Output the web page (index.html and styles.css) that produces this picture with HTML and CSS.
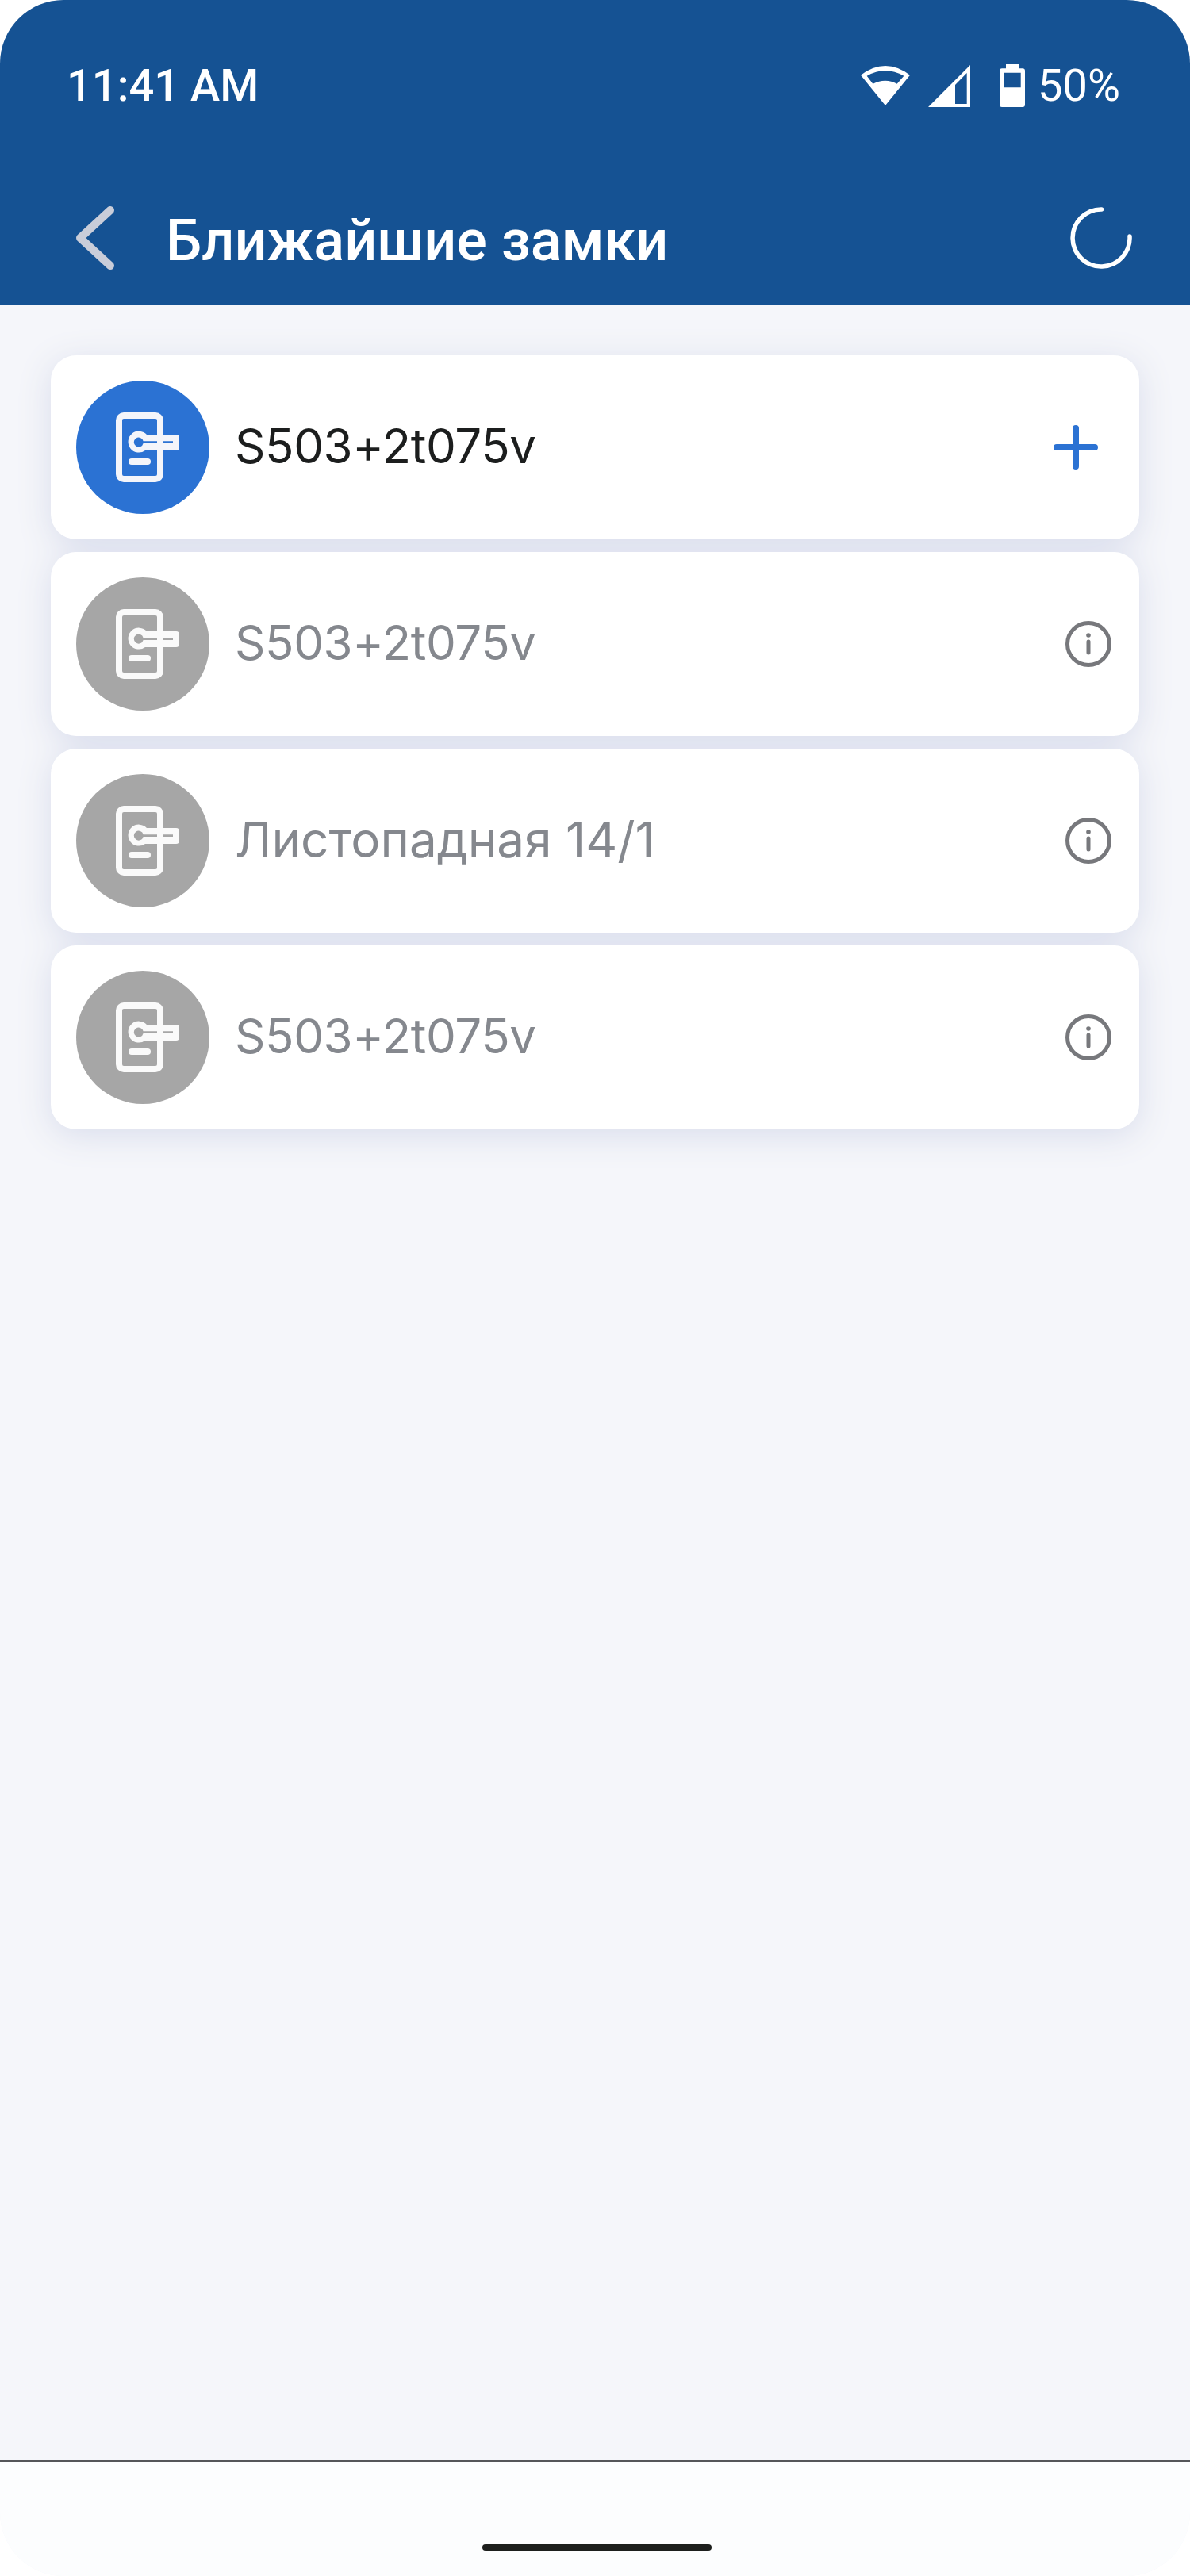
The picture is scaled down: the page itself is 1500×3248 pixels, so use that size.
FILE: index.html
```html
<!DOCTYPE html>
<html lang="ru">
<head>
    <meta charset="UTF-8">
    <meta name="viewport" content="width=device-width, initial-scale=1.0">
    <title>Ближайшие замки</title>
    <link rel="stylesheet" href="styles.css">
</head>
<body>
    <svg class="defs" width="0" height="0">
        <symbol id="lock-door" viewBox="0 0 168 168">
            <rect x="54" y="44" width="52" height="80" rx="6" fill="none" stroke="currentColor" stroke-width="8"/>
            <path fill="currentColor" fill-rule="evenodd" d="M89 68H126a4 4 0 0 1 4 4V84a4 4 0 0 1-4 4H87A13.5 13.5 0 1 1 89 68ZM84.6 76.2H122V79H84.6A6 6 0 1 1 84.6 76.2Z"/>
            <rect x="66" y="98" width="28" height="8" rx="4" fill="currentColor"/>
        </symbol>
        <symbol id="info" viewBox="0 0 58 58">
            <circle cx="29" cy="29" r="26.5" fill="none" stroke="currentColor" stroke-width="5"/>
            <circle cx="29" cy="18" r="2.8" fill="currentColor"/>
            <line x1="29" y1="26" x2="29" y2="40" stroke="currentColor" stroke-width="5" stroke-linecap="round"/>
        </symbol>
    </svg>

    <div class="screen">
        <header class="app-header">
            <div class="status-bar">
                <span class="status-time">11:41 AM</span>
                <div class="status-icons">
                    <svg class="icon-wifi" width="62" height="50" viewBox="0 0 62 50">
                        <path fill="#fff" fill-rule="evenodd" d="M0 11.7Q31-11.7 62 11.7L31 50ZM7.7 12.7Q31-.7 54.3 12.7L45.7 22.7Q31 14.7 15.3 22.7Z"/>
                    </svg>
                    <svg class="icon-signal" width="53" height="53" viewBox="0 0 53 53">
                        <path fill="#fff" fill-rule="evenodd" d="M0 53L53 0V53ZM34 49H48.7V10L34 25Z"/>
                    </svg>
                    <svg class="icon-battery" width="32" height="54" viewBox="0 0 32 54">
                        <path fill="#fff" fill-rule="evenodd" d="M8 0H24V5.3H29a3 3 0 0 1 3 3V51a3 3 0 0 1-3 3H3a3 3 0 0 1-3-3V8.3a3 3 0 0 1 3-3H8ZM5.3 10.7V29.3H26.7V10.7Z"/>
                    </svg>
                    <span class="status-battery">50%</span>
                </div>
            </div>
            <div class="toolbar">
                <svg class="back-icon" width="48" height="80" viewBox="0 0 48 80">
                    <path d="M43 5L5 40L43 75" fill="none" stroke="#c9cdd9" stroke-width="10" stroke-linecap="round" stroke-linejoin="round"/>
                </svg>
                <h1 class="toolbar-title">Ближайшие замки</h1>
                <svg class="spinner" width="78" height="78" viewBox="0 0 78 78">
                    <path d="M39.5 3A36 36 0 1 0 75 37" fill="none" stroke="#fff" stroke-width="5.5" stroke-linecap="round"/>
                </svg>
            </div>
        </header>

        <main class="lock-list">
            <div class="lock-card active">
                <svg class="lock-avatar"><use href="#lock-door"/></svg>
                <span class="lock-name">S503+2t075v</span>
                <svg class="add-icon" width="56" height="56" viewBox="0 0 56 56">
                    <path d="M28 4V52M4 28H52" fill="none" stroke="currentColor" stroke-width="8" stroke-linecap="round"/>
                </svg>
            </div>
            <div class="lock-card">
                <svg class="lock-avatar"><use href="#lock-door"/></svg>
                <span class="lock-name">S503+2t075v</span>
                <svg class="info-icon"><use href="#info"/></svg>
            </div>
            <div class="lock-card">
                <svg class="lock-avatar"><use href="#lock-door"/></svg>
                <span class="lock-name cyrillic">Листопадная 14/1</span>
                <svg class="info-icon"><use href="#info"/></svg>
            </div>
            <div class="lock-card">
                <svg class="lock-avatar"><use href="#lock-door"/></svg>
                <span class="lock-name">S503+2t075v</span>
                <svg class="info-icon"><use href="#info"/></svg>
            </div>
        </main>

        <footer class="nav-bar">
            <div class="nav-handle"></div>
        </footer>
    </div>
</body>
</html>
```

FILE: styles.css
```css
html, body {
    margin: 0;
    background: #fff;
}
.defs {
    position: absolute;
}
.screen {
    display: flex;
    flex-direction: column;
    height: 3248px;
    border-radius: 80px;
    overflow: hidden;
    background: #f5f6fa;
    font-family: Roboto, sans-serif;
}
.app-header {
    background: #155293;
    color: #fff;
}
.status-bar {
    display: flex;
    align-items: center;
    justify-content: space-between;
    height: 216px;
    padding: 0 88px 0 84px;
}
.status-time {
    font-size: 56px;
    font-weight: 500;
}
.status-icons {
    display: flex;
    align-items: center;
}
.icon-signal {
    margin-left: 23px;
}
.icon-battery {
    margin-left: 37px;
    margin-right: 16px;
}
.status-battery {
    font-size: 56px;
}
.toolbar {
    display: flex;
    align-items: center;
    height: 168px;
    padding: 0 73px 0 96px;
}
.toolbar-title {
    flex: 1;
    margin: 6px 0 0 65px;
    font-size: 72px;
    font-weight: 500;
}
.lock-list {
    flex: 1;
    display: flex;
    flex-direction: column;
    gap: 16px;
    padding: 64px;
    filter: drop-shadow(0 8px 20px #d9ddec);
}
.lock-card {
    display: flex;
    align-items: center;
    height: 232px;
    box-sizing: border-box;
    padding: 0 32px;
    border-radius: 32px;
    background: #fff;
    color: #85888e;
}
.lock-avatar {
    flex: none;
    width: 168px;
    height: 168px;
    margin-right: 32px;
    border-radius: 50%;
    background: #a6a6a6;
    color: #fafafa;
}
.lock-name {
    flex: 1;
    font-family: Inter, sans-serif;
    font-size: 60px;
    letter-spacing: -0.4px;
    margin-top: -4px;
}
.cyrillic {
    font-size: 62px;
    letter-spacing: 0;
}
.info-icon {
    width: 58px;
    height: 58px;
    margin-right: 3px;
    color: #77787c;
}
.active {
    color: #1c1e1e;
}
.active .lock-avatar {
    background: #2b72d3;
    color: #f4f5fa;
}
.add-icon {
    margin-right: 20px;
    color: #2b72d3;
}
.nav-bar {
    display: flex;
    justify-content: center;
    height: 144px;
    border-top: 2px solid #55565a;
    background: #fcfdfe;
}
.nav-handle {
    width: 289px;
    height: 8px;
    margin: 104px 0 0 4px;
    border-radius: 4px;
    background: #1d1f1d;
}
```
